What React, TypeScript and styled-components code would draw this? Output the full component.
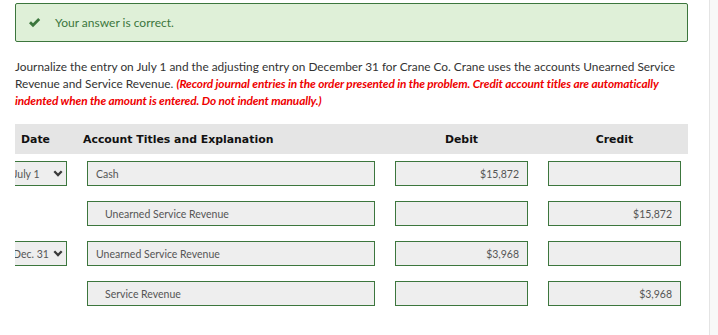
import styled, { createGlobalStyle } from "styled-components";

const GlobalStyle = createGlobalStyle`
  body {
    margin: 0;
    background: #f8f8f8;
    font-family: Lato, "Open Sans", sans-serif;
  }
`;

type Entry = {
  date?: string;
  account: string;
  indent?: boolean;
  debit?: string;
  credit?: string;
};

const entries: Entry[] = [
  { date: "July 1", account: "Cash", debit: "$15,872" },
  { account: "Unearned Service Revenue", indent: true, credit: "$15,872" },
  { date: "Dec. 31", account: "Unearned Service Revenue", debit: "$3,968" },
  { account: "Service Revenue", indent: true, credit: "$3,968" },
];

const Page = styled.div`
  width: 710px;
  min-height: 335px;
  box-sizing: border-box;
  background: #ffffff;
  border-right: 1px solid #e4e4e4;
  padding: 3px 0 0 15px;
`;

const Content = styled.div`
  width: 673px;
`;

const Alert = styled.div`
  display: flex;
  align-items: center;
  gap: 14px;
  height: 39px;
  box-sizing: border-box;
  padding-left: 12px;
  background: #dff0d8;
  border: 1px solid #3c763d;
  border-radius: 2px;
  color: #3c763d;
  font-size: 12px;
`;

const Prompt = styled.p`
  margin: 16px 0 15px;
  font-size: 11.85px;
  line-height: 17px;
  color: #333333;
`;

const Instruction = styled.em`
  color: #ee0000;
  font-weight: 700;
  letter-spacing: -0.12px;
`;

const Grid = styled.div`
  display: grid;
  grid-template-columns: 52px 288px 133px 133px;
  column-gap: 20px;
  padding-right: 8px;
`;

const HeaderRow = styled(Grid)`
  height: 30px;
  align-items: center;
  background: #e5e5e5;
  font-family: "DejaVu Sans", Verdana, sans-serif;
  font-weight: 700;
  font-size: 10.9px;
  color: #111111;
  margin-bottom: 7px;
`;

const HeaderCell = styled.div<{ $align?: string; $shift?: number }>`
  text-align: ${(p) => p.$align || "left"};
  margin-left: ${(p) => p.$shift || 0}px;
  white-space: nowrap;
`;

const Row = styled(Grid)`
  height: 25px;
  margin-bottom: 15px;
`;

const DateClip = styled.div`
  overflow: hidden;
  height: 25px;
`;

const DateSelect = styled.div`
  display: flex;
  align-items: center;
  justify-content: space-between;
  height: 25px;
  box-sizing: border-box;
  margin-left: -8px;
  padding: 0 3px 0 5px;
  background: #eeeeee;
  border: 1px solid #3c763d;
  color: #555555;
  font-size: 10.5px;
`;

const Field = styled.div<{ $indent?: boolean; $right?: boolean }>`
  display: flex;
  align-items: center;
  justify-content: ${(p) => (p.$right ? "flex-end" : "flex-start")};
  height: 25px;
  box-sizing: border-box;
  padding: 0 8px 0 ${(p) => (p.$indent ? 17 : 8)}px;
  background: #eeeeee;
  border: 1px solid #3c763d;
  color: #555555;
  font-size: 10.5px;
  white-space: nowrap;
`;

const CheckIcon = () => (
  <svg width="13" height="11" viewBox="0 0 13 11">
    <path d="M1 6.2 L3 4.2 L5 6.2 L10.2 1 L12.2 3 L5 10.2 Z" fill="#3c763d" />
  </svg>
);

const Chevron = () => (
  <svg width="10" height="7" viewBox="0 0 10 7">
    <polyline
      points="1.3,1.3 5,5 8.7,1.3"
      fill="none"
      stroke="#3a3a3a"
      strokeWidth="2.3"
    />
  </svg>
);

export default function App() {
  return (
    <>
      <GlobalStyle />
      <Page>
        <Content>
          <Alert>
            <CheckIcon />
            Your answer is correct.
          </Alert>
          <Prompt>
            Journalize the entry on July 1 and the adjusting entry on December
            31 for Crane Co. Crane uses the accounts Unearned Service Revenue
            and Service Revenue.{" "}
            <Instruction>
              (Record journal entries in the order presented in the problem.
              Credit account titles are automatically indented when the amount
              is entered. Do not indent manually.)
            </Instruction>
          </Prompt>
          <HeaderRow>
            <HeaderCell $shift={6}>Date</HeaderCell>
            <HeaderCell $shift={-4}>Account Titles and Explanation</HeaderCell>
            <HeaderCell $align="center">Debit</HeaderCell>
            <HeaderCell $align="center">Credit</HeaderCell>
          </HeaderRow>
          {entries.map((e, i) => (
            <Row key={i}>
              <DateClip>
                {e.date && (
                  <DateSelect>
                    <span>{e.date}</span>
                    <Chevron />
                  </DateSelect>
                )}
              </DateClip>
              <Field $indent={e.indent}>{e.account}</Field>
              <Field $right>{e.debit}</Field>
              <Field $right>{e.credit}</Field>
            </Row>
          ))}
        </Content>
      </Page>
    </>
  );
}
